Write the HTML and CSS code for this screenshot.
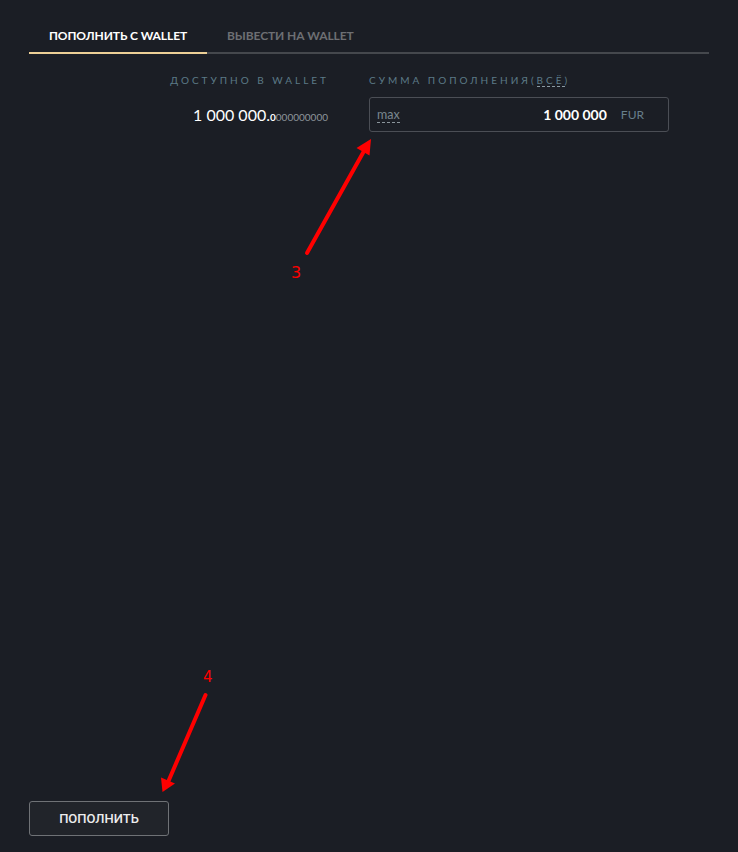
FILE: index.html
```html
<!DOCTYPE html>
<html lang="ru">
<head>
<meta charset="utf-8">
<title>Пополнить с Wallet</title>
<link rel="stylesheet" href="styles.css">
</head>
<body>
<div class="page">
  <nav class="tabs">
    <div class="tab tab-active">ПОПОЛНИТЬ С WALLET</div>
    <div class="tab">ВЫВЕСТИ НА WALLET</div>
  </nav>
  <div class="form">
    <div class="label label-left">ДОСТУПНО В WALLET</div>
    <div class="label">СУММА ПОПОЛНЕНИЯ(<span class="dashed">ВСЁ</span>)</div>
    <div class="available"><span class="big">1 000 000.</span><span class="small-first">0</span><span class="small">000000000</span></div>
    <div class="input">
      <span class="max">max</span>
      <span class="amount">1 000 000</span>
      <span class="cur">FUR</span>
    </div>
  </div>
  <div class="footer">
    <button class="btn">ПОПОЛНИТЬ</button>
  </div>
</div>
<svg class="annot" width="738" height="852" viewBox="0 0 738 852">
  <line x1="307" y1="253" x2="364" y2="151" stroke="#ff0000" stroke-width="4" stroke-linecap="round"/>
  <polygon points="371,139 356.5,148 369.5,155.5" fill="#ff0000"/>
  <text x="291" y="278" class="num">3</text>
  <line x1="205.5" y1="695" x2="168.5" y2="781" stroke="#ff0000" stroke-width="4" stroke-linecap="round"/>
  <polygon points="162.5,792 161,777.5 175,783.5" fill="#ff0000"/>
  <text x="203" y="682" class="num num4">4</text>
</svg>
</body>
</html>
```
FILE: styles.css
```css
html, body {
  margin: 0;
  padding: 0;
  background: #1b1e25;
}
body {
  width: 738px;
  height: 852px;
  position: relative;
  overflow: hidden;
  font-family: Lato, "Noto Sans", sans-serif;
}
.page {
  height: 852px;
  padding: 0 29px;
  box-sizing: border-box;
  display: flex;
  flex-direction: column;
}
.tabs {
  display: flex;
  border-bottom: 2px solid #45484d;
}
.tab {
  padding: 28px 20px 8px;
  font-size: 12px;
  line-height: 16px;
  font-weight: 700;
  letter-spacing: -0.1px;
  color: #6d6f73;
  margin-bottom: -2px;
  border-bottom: 2px solid transparent;
}
.tab-active {
  color: #ffffff;
  border-bottom-color: #eccf96;
}
.form {
  margin-top: 20px;
  display: grid;
  grid-template-columns: 300px 300px;
  column-gap: 40px;
  row-gap: 11px;
  align-items: center;
}
.label {
  font-size: 10px;
  line-height: 12px;
  letter-spacing: 3px;
  color: #5c7a87;
}
.label-left {
  text-align: right;
}
.dashed {
  border-bottom: 1px dashed #8a9aa3;
}
.available {
  text-align: right;
  color: #ffffff;
  white-space: nowrap;
  padding-right: 1px;
}
.big {
  font-size: 16px;
}
.small-first {
  font-size: 10px;
  font-weight: 700;
}
.small {
  font-size: 10px;
  color: #8d959b;
}
.input {
  height: 35px;
  box-sizing: border-box;
  border: 1px solid #4b4e55;
  border-radius: 3px;
  display: flex;
  align-items: center;
  padding: 0 24px 0 7px;
}
.max {
  font-size: 12.5px;
  color: #7a8790;
  line-height: 14px;
  border-bottom: 1px dashed #8a949b;
  margin-top: 1px;
}
.amount {
  margin-left: auto;
  font-size: 14px;
  font-weight: 700;
  color: #ffffff;
}
.cur {
  margin-left: 14px;
  font-size: 12px;
  color: #687f8b;
}
.footer {
  margin-top: auto;
  padding-bottom: 16px;
}
.btn {
  width: 140px;
  height: 35px;
  background: #21242a;
  border: 1px solid #6f7276;
  border-radius: 3px;
  color: #ececec;
  font-family: Roboto, "Noto Sans", sans-serif;
  font-size: 13px;
  font-weight: 500;
  padding: 0;
}
.annot {
  position: absolute;
  left: 0;
  top: 0;
  pointer-events: none;
}
.num {
  fill: #ff0000;
  font-family: "DejaVu Sans", sans-serif;
  font-size: 16px;
}
.num4 {
  font-size: 15px;
}
```
